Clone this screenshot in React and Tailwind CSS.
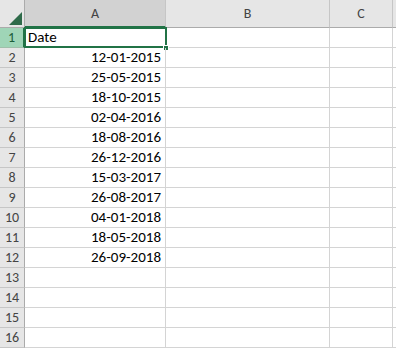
import React from "react";

const dates = [
  "12-01-2015",
  "25-05-2015",
  "18-10-2015",
  "02-04-2016",
  "18-08-2016",
  "26-12-2016",
  "15-03-2017",
  "26-08-2017",
  "04-01-2018",
  "18-05-2018",
  "26-09-2018",
];

const font = { fontFamily: "Carlito, Calibri, 'Liberation Sans', Arial, sans-serif" };

export default function App() {
  const rows = [];
  for (let i = 1; i <= 16; i++) {
    const value = i === 1 ? "Date" : dates[i - 2] || "";
    const selected = i === 1;
    rows.push(
      <div key={i} className="flex h-[20px] shrink-0">
        <div
          className={
            selected
              ? "w-[25px] shrink-0 flex items-center justify-center bg-[#9fd5b7] text-[#1b5e3a] border-b border-[#9fbfaa] border-r-2 border-r-[#217346] text-[14px]"
              : "w-[25px] shrink-0 flex items-center justify-center bg-[#e6e6e6] text-[#444] border-b border-[#c6c6c6] border-r border-r-[#ababab] text-[14px]"
          }
        >
          {i}
        </div>
        <div
          className={
            "relative w-[141px] shrink-0 flex items-center border-b border-r border-[#d4d4d4] text-[15px] text-black " +
            (selected ? "justify-start pl-[3px]" : "justify-end pr-[4px]")
          }
        >
          {value}
          {selected && (
            <>
              <div className="absolute left-[-1px] top-[-1px] right-[-2px] bottom-[-1px] border-2 border-[#217346] pointer-events-none" />
              <div className="absolute right-[-4px] bottom-[-4px] w-[6px] h-[6px] bg-[#217346] border border-white" />
            </>
          )}
        </div>
        <div className="w-[164px] shrink-0 border-b border-r border-[#d4d4d4]" />
        <div className="w-[63px] shrink-0 border-b border-r border-[#d4d4d4]" />
        <div className="flex-1 border-b border-[#d4d4d4]" />
      </div>
    );
  }

  return (
    <div className="w-[396px] h-[348px] overflow-hidden bg-white" style={font}>
      <div className="flex h-[28px] shrink-0">
        <div className="relative w-[25px] shrink-0 bg-[#e6e6e6] border-b border-r border-[#ababab]">
          <svg className="absolute right-[2px] bottom-[2px]" width="13" height="13" viewBox="0 0 13 13">
            <polygon points="13,0 13,13 0,13" fill="#2f6b4a" />
          </svg>
        </div>
        <div className="w-[141px] shrink-0 bg-[#d2d2d2] flex items-center justify-center text-[14px] text-[#444] border-b-2 border-[#217346] border-r border-r-[#c6c6c6]">
          A
        </div>
        <div className="w-[164px] shrink-0 bg-[#e6e6e6] flex items-center justify-center text-[14px] text-[#444] border-b border-[#ababab] border-r border-r-[#c6c6c6]">
          B
        </div>
        <div className="w-[63px] shrink-0 bg-[#e6e6e6] flex items-center justify-center text-[14px] text-[#444] border-b border-[#ababab] border-r border-r-[#c6c6c6]">
          C
        </div>
        <div className="flex-1 bg-[#e6e6e6] border-b border-[#ababab]" />
      </div>
      {rows}
    </div>
  );
}
